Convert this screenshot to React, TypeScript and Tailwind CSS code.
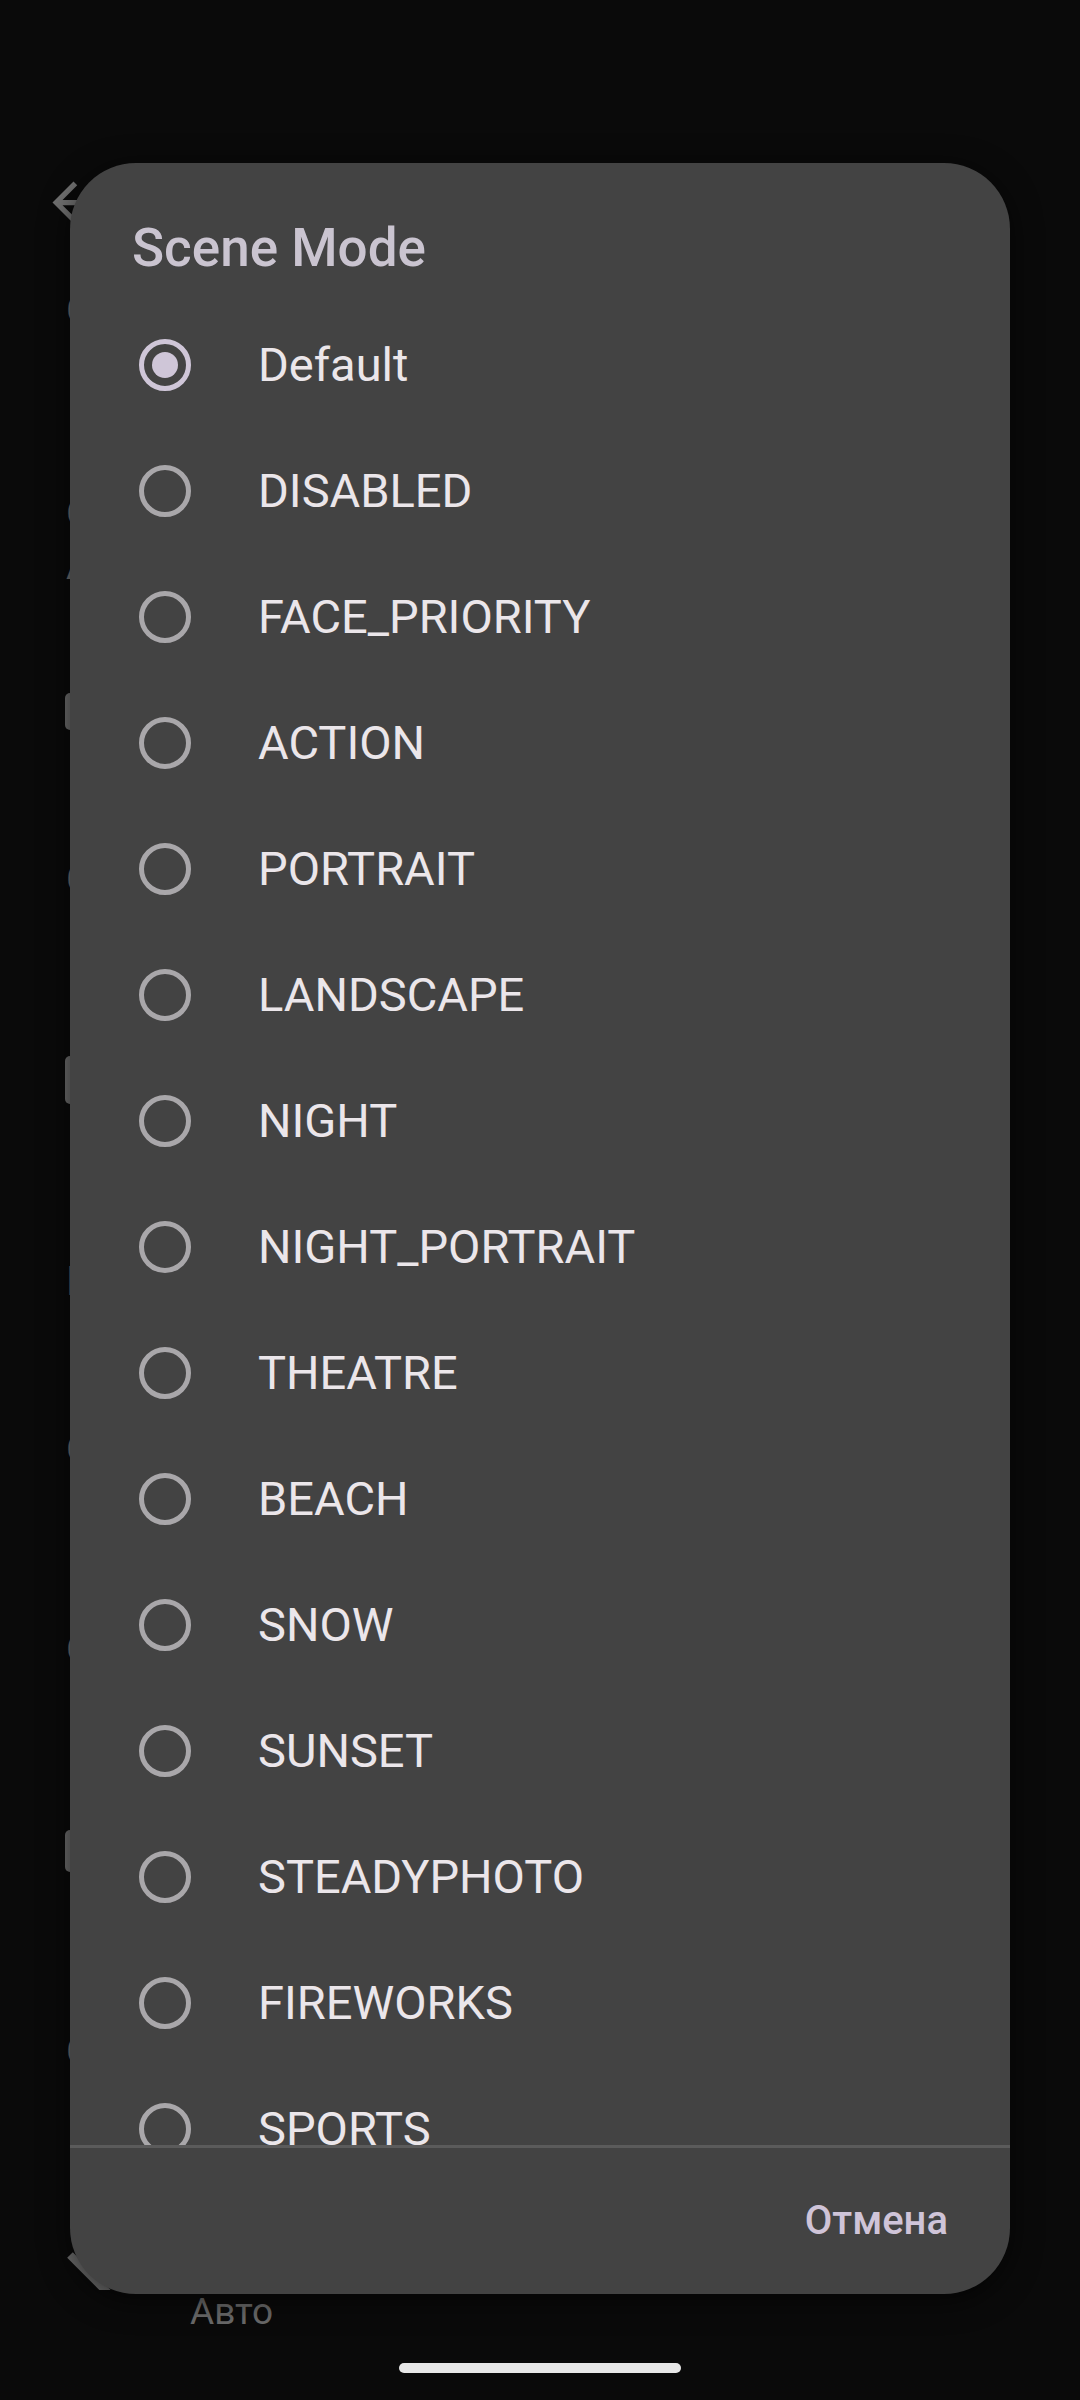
import { useState } from 'react';

const modes = [
  'Default',
  'DISABLED',
  'FACE_PRIORITY',
  'ACTION',
  'PORTRAIT',
  'LANDSCAPE',
  'NIGHT',
  'NIGHT_PORTRAIT',
  'THEATRE',
  'BEACH',
  'SNOW',
  'SUNSET',
  'STEADYPHOTO',
  'FIREWORKS',
  'SPORTS',
  'PARTY',
  'CANDLELIGHT',
];

const Radio = ({ checked }: { checked: boolean }) => (
  <span
    className={
      checked
        ? 'flex h-[52px] w-[52px] shrink-0 items-center justify-center rounded-full border-[5px] border-[#cfc6d8]'
        : 'flex h-[52px] w-[52px] shrink-0 items-center justify-center rounded-full border-[5px] border-[#a9a7aa]'
    }
  >
    {checked && <span className="h-[26px] w-[26px] rounded-full bg-[#cfc6d8]" />}
  </span>
);

// the settings screen that sits under the dialog, mostly hidden
const Backdrop = () => (
  <div className="flex flex-col pl-[42px] text-[40px] leading-[40px] text-[#6b6b6b]">
    <svg className="mt-[171px] h-[63px] w-[63px]" viewBox="0 0 24 24" fill="#707070">
      <path d="M20 11H7.83l5.59-5.59L12 4l-8 8 8 8 1.41-1.41L7.83 13H20v-2z" />
    </svg>
    <span className="ml-[24px] mt-[57px]">Сцена</span>
    <span className="ml-[24px] mt-[163px]">Озвучка</span>
    <span className="ml-[24px] mt-[12px]">Авто</span>
    <span className="ml-[23px] mt-[107px] h-[37px] w-[12px] rounded-[5px] bg-[#6b6b6b]" />
    <span className="ml-[24px] mt-[130px]">Сетка</span>
    <span className="ml-[23px] mt-[156px] h-[48px] w-[12px] rounded-[5px] bg-[#6b6b6b]" />
    <span className="ml-[24px] mt-[158px]">Цвет</span>
    <span className="ml-[24px] mt-[128px]">Объектив</span>
    <span className="ml-[24px] mt-[160px]">Отсчёт</span>
    <span className="ml-[23px] mt-[160px] h-[42px] w-[12px] rounded-[5px] bg-[#6b6b6b]" />
    <span className="ml-[24px] mt-[160px]">Съёмка</span>
    <svg className="mt-[168px] h-[50px] w-[80px]" viewBox="0 0 80 50">
      <path d="M28 15 L70 57" stroke="#6f6f6f" strokeWidth="8" fill="none" />
    </svg>
    <span className="ml-[148px] mt-[3px] text-[37px] leading-[37px] text-[#6a6a6a]">Авто</span>
  </div>
);

export default function App() {
  const [selected, setSelected] = useState('Default');

  return (
    <div className="relative flex h-[2400px] w-full flex-col overflow-hidden bg-[#0a0a0a] font-['Roboto',sans-serif]">
      <Backdrop />
      <div className="mx-auto mt-[33px] h-[10px] w-[282px] rounded-full bg-[#e8e8e8]" />

      <div className="absolute left-[70px] top-[163px] flex h-[2131px] w-[940px] flex-col overflow-hidden rounded-[66px] bg-[#434343] shadow-[0_6px_30px_rgba(0,0,0,0.6)]">
        <div className="h-[139px] shrink-0 pl-[62px] pt-[54px]">
          <h2 className="text-[53px] font-medium leading-[62px] text-[#cac4d0]">Scene Mode</h2>
        </div>

        <div className="flex-1 overflow-hidden">
          {modes.map((m) => (
            <div
              key={m}
              onClick={() => setSelected(m)}
              className="flex h-[126px] cursor-pointer items-center pl-[69px]"
            >
              <Radio checked={selected === m} />
              <span className="ml-[67px] text-[47px] leading-[54px] text-[#ebe6ea]">{m}</span>
            </div>
          ))}
        </div>

        <div className="flex h-[149px] shrink-0 justify-end border-t-[3px] border-[#5b5b5b] pr-[62px] pt-[49px]">
          <button className="h-[47px] text-[40px] font-medium leading-[47px] text-[#cfc4d8]">Отмена</button>
        </div>
      </div>
    </div>
  );
}
